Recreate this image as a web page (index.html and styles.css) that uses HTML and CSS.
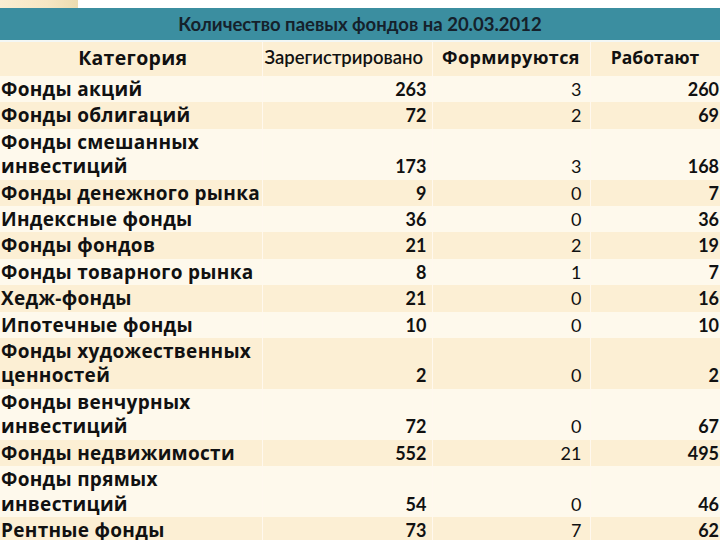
FILE: index.html
```html
<!DOCTYPE html>
<html lang="ru">
<head>
<meta charset="utf-8">
<title>Количество паевых фондов</title>
<link rel="stylesheet" href="styles.css">
</head>
<body>
<div class="strip"></div>
<table class="funds">
  <colgroup>
    <col class="c1"><col class="c2"><col class="c3"><col class="c4">
  </colgroup>
  <thead>
    <tr class="title"><th colspan="4">Количество паевых фондов на 20.03.2012</th></tr>
    <tr class="spacer"><td colspan="4"></td></tr>
    <tr class="head dark">
      <th class="cat">Категория</th>
      <th class="reg">Зарегистрировано</th>
      <th class="geo">Формируются</th>
      <th class="geo">Работают</th>
    </tr>
  </thead>
  <tbody>
    <tr class="light"><td class="cat">Фонды акций</td><td class="n b">263</td><td class="n m">3</td><td class="n b e">260</td></tr>
    <tr class="dark"><td class="cat">Фонды облигаций</td><td class="n b">72</td><td class="n m">2</td><td class="n b e">69</td></tr>
    <tr class="light"><td class="cat">Фонды смешанных<br>инвестиций</td><td class="n b">173</td><td class="n m">3</td><td class="n b e">168</td></tr>
    <tr class="dark"><td class="cat">Фонды денежного рынка</td><td class="n b">9</td><td class="n m">0</td><td class="n b e">7</td></tr>
    <tr class="light"><td class="cat">Индексные фонды</td><td class="n b">36</td><td class="n m">0</td><td class="n b e">36</td></tr>
    <tr class="dark"><td class="cat">Фонды фондов</td><td class="n b">21</td><td class="n m">2</td><td class="n b e">19</td></tr>
    <tr class="light"><td class="cat">Фонды товарного рынка</td><td class="n b">8</td><td class="n m">1</td><td class="n b e">7</td></tr>
    <tr class="dark"><td class="cat">Хедж-фонды</td><td class="n b">21</td><td class="n m">0</td><td class="n b e">16</td></tr>
    <tr class="light"><td class="cat">Ипотечные фонды</td><td class="n b">10</td><td class="n m">0</td><td class="n b e">10</td></tr>
    <tr class="dark"><td class="cat">Фонды художественных<br>ценностей</td><td class="n b">2</td><td class="n m">0</td><td class="n b e">2</td></tr>
    <tr class="light"><td class="cat">Фонды венчурных<br>инвестиций</td><td class="n b">72</td><td class="n m">0</td><td class="n b e">67</td></tr>
    <tr class="dark"><td class="cat">Фонды недвижимости</td><td class="n b">552</td><td class="n m">21</td><td class="n b e">495</td></tr>
    <tr class="light"><td class="cat">Фонды прямых<br>инвестиций</td><td class="n b">54</td><td class="n m">0</td><td class="n b e">46</td></tr>
    <tr class="dark"><td class="cat">Рентные фонды</td><td class="n b">73</td><td class="n m">7</td><td class="n b e">62</td></tr>
  </tbody>
</table>
</body>
</html>
```
FILE: styles.css
```css
html, body {
  margin: 0;
  padding: 0;
  background: #ffffff;
  overflow: hidden;
}
.strip {
  display: block;
  width: 78px;
  height: 8px;
  background: linear-gradient(90deg, #fbeed2 0%, #f6e7c4 60%, #ecdcb0 100%);
}
.funds {
  display: table;
  width: 720px;
  border-collapse: collapse;
  table-layout: fixed;
  color: #111111;
}
.c1 { width: 262px; }
.c2 { width: 170px; }
.c3 { width: 158px; }
.c4 { width: 130px; }

.title { background: #3b8ea0; }
.title th {
  height: 32px;
  padding: 0;
  background: #3b8ea0;
  color: #15212b;
  font-family: Lato, "Liberation Sans", sans-serif;
  font-weight: 700;
  font-size: 18.5px;
  text-align: center;
  vertical-align: middle;
}
.spacer td {
  height: 2px;
  padding: 0;
  background: #f3f7f5;
}
.dark { background: #fcefd4; }
.light { background: #fef9ec; }

.head th {
  height: 30px;
  padding: 0 0 4px;
  text-align: center;
  vertical-align: middle;
  font-weight: 700;
  border-right: 1px solid #fff8ee;
}
.head th.cat {
  font-family: "Open Sans", "DejaVu Sans", sans-serif;
  font-size: 19.5px;
  letter-spacing: 0.3px;
  padding-left: 4px;
}
.head th.reg {
  font-family: Lato, "Liberation Sans", sans-serif;
  font-weight: 600;
  font-size: 18.5px;
  text-align: left;
  padding-left: 2px;
}
.head th.geo {
  font-family: "Open Sans", "DejaVu Sans", sans-serif;
  font-size: 18px;
  letter-spacing: 0.4px;
}
.head th.geo:last-child { font-size: 17.5px; letter-spacing: 0; }

tbody td {
  padding: 1px 0;
  line-height: 24.4px;
  vertical-align: bottom;
  border-right: 1px solid #fff8ee;
}
td.cat {
  font-family: "Open Sans", "DejaVu Sans", sans-serif;
  font-weight: 700;
  font-size: 19px;
  letter-spacing: 0.3px;
  padding-left: 1px;
  white-space: nowrap;
}
td.n {
  font-family: Lato, "Liberation Sans", sans-serif;
  font-size: 18px;
  text-align: right;
}
td.b { font-weight: 700; padding-right: 5px; }
td.m { font-weight: 400; padding-right: 8px; }
td.e { padding-right: 1px; border-right: none; }
```
